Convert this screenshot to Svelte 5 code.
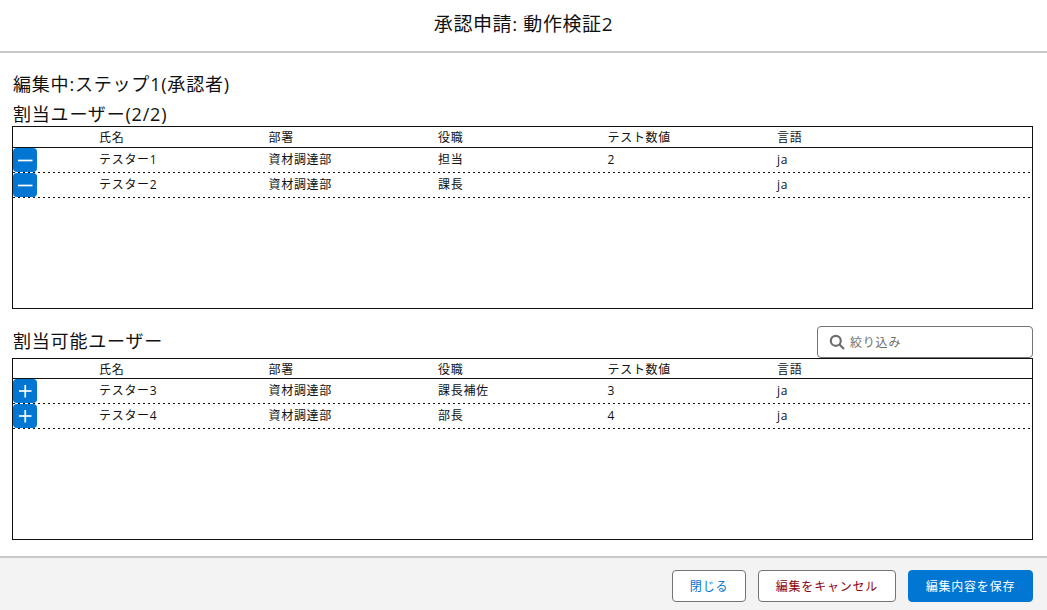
<script lang="ts">
  const columns = ["氏名", "部署", "役職", "テスト数値", "言語"];

  const assigned = [
    { name: "テスター1", dept: "資材調達部", role: "担当", num: "2", lang: "ja" },
    { name: "テスター2", dept: "資材調達部", role: "課長", num: "", lang: "ja" },
  ];

  const available = [
    { name: "テスター3", dept: "資材調達部", role: "課長補佐", num: "3", lang: "ja" },
    { name: "テスター4", dept: "資材調達部", role: "部長", num: "4", lang: "ja" },
  ];
</script>

{#snippet table(rows, icon)}
  <div class="table" class:compact={icon === "add"}>
    <div class="row head">
      <span></span>
      {#each columns as col}
        <span>{col}</span>
      {/each}
    </div>
    {#each rows as row}
      <div class="row item">
        <button class="icon-btn" aria-label={icon}>
          <svg viewBox="0 0 24 24" width="24" height="24">
            {#if icon === "add"}
              <path d="M6 12h12.500" />
              <path d="M12.250 6v12.500" />
            {:else}
              <path d="M5 12.500h14.500" />
            {/if}
          </svg>
        </button>
        <span>{row.name}</span>
        <span>{row.dept}</span>
        <span>{row.role}</span>
        <span>{row.num}</span>
        <span>{row.lang}</span>
      </div>
    {/each}
  </div>
{/snippet}

<div class="page">
  <header class="title">承認申請: 動作検証2</header>

  <main class="content">
    <div class="step">編集中:ステップ1(承認者)</div>
    <div class="label">割当ユーザー(2/2)</div>
    {@render table(assigned, "remove")}

    <div class="available-head">
      <div class="label">割当可能ユーザー</div>
      <div class="search">
        <svg viewBox="0 0 16 16" width="16" height="16">
          <circle cx="6.800" cy="6.800" r="5" />
          <path d="M10.500 10.500l4.500 4.500" />
        </svg>
        <span>絞り込み</span>
      </div>
    </div>
    {@render table(available, "add")}
  </main>

  <footer class="footer">
    <button class="btn neutral">閉じる</button>
    <button class="btn danger">編集をキャンセル</button>
    <button class="btn brand">編集内容を保存</button>
  </footer>
</div>

<style>
  :global(body) {
    margin: 0;
    background: #fff;
  }

  .page {
    width: 1047px;
    height: 610px;
    display: flex;
    flex-direction: column;
    font-family: "Open Sans", "Noto Sans CJK JP", sans-serif;
    color: #111;
    box-sizing: border-box;
    overflow: hidden;
  }

  .title {
    box-sizing: border-box;
    flex: none;
    border-bottom: 2px solid #c9c9c9;
    height: 53px;
    padding-bottom: 5px;
    display: flex;
    align-items: center;
    justify-content: center;
    font-size: 19px;
    letter-spacing: 0.6px;
  }

  .content {
    flex: 1;
    padding: 19px 14px 0 12px;
    display: flex;
    flex-direction: column;
    min-height: 0;
  }

  .step {
    font-size: 18px;
    letter-spacing: 0.8px;
    line-height: 24px;
    height: 24px;
    padding-left: 1px;
  }

  .label {
    font-size: 18px;
    letter-spacing: 0.8px;
    line-height: 24px;
    padding-left: 1px;
    margin-top: 6px;
  }

  .table {
    border: 1px solid #111;
    height: 183px;
    box-sizing: border-box;
    font-size: 12px;
    letter-spacing: 0.7px;
  }

  .table.compact {
    height: 182px;
  }

  .row {
    display: grid;
    grid-template-columns: 86px repeat(4, 169.500px) 1fr;
    align-items: center;
  }

  .head {
    height: 21px;
    border-bottom: 1px solid #111;
    box-sizing: border-box;
    line-height: 22px;
  }

  .compact .head {
    height: 20px;
  }

  .item {
    height: 25px;
    box-sizing: border-box;
    padding-bottom: 1px;
    background: repeating-linear-gradient(90deg, #111 0 2px, transparent 2px 5px) left bottom / 100% 1px no-repeat;
  }

  .item span {
    line-height: 20px;
    margin-top: -1px;
  }

  .icon-btn {
    width: 24px;
    height: 24px;
    padding: 0;
    border: none;
    border-radius: 4px;
    background: #0176d3;
    display: flex;
    align-items: center;
    justify-content: center;
  }

  .icon-btn svg {
    fill: none;
    stroke: #fff;
    stroke-width: 1.700;
  }

  .available-head {
    display: flex;
    align-items: flex-end;
    justify-content: space-between;
    margin-top: 17px;
    height: 32px;
  }

  .available-head .label {
    margin: 0 0 3px;
    line-height: 28px;
  }

  .search {
    width: 216px;
    height: 32px;
    box-sizing: border-box;
    border: 1px solid #747474;
    border-radius: 4px;
    display: flex;
    align-items: center;
    gap: 5px;
    padding-left: 11px;
    font-size: 12px;
    letter-spacing: 0.8px;
    color: #706e6b;
  }

  .search svg {
    fill: none;
    stroke: #706e6b;
    stroke-width: 2.200;
  }

  .footer {
    flex: none;
    height: 54px;
    box-sizing: border-box;
    border-top: 2px solid #c9c9c9;
    background: #f3f3f3;
    display: flex;
    align-items: flex-start;
    justify-content: flex-end;
    gap: 12px;
    padding: 12px 14px 0 0;
  }

  .btn {
    height: 32px;
    padding: 0 16.750px;
    border-radius: 4px;
    font-family: inherit;
    font-size: 12px;
    letter-spacing: 0.8px;
    border: 1px solid #747474;
    background: #fff;
  }

  .neutral {
    color: #0176d3;
  }

  .danger {
    color: #8e030f;
  }

  .brand {
    background: #0176d3;
    border-color: #0176d3;
    color: #fff;
  }
</style>
